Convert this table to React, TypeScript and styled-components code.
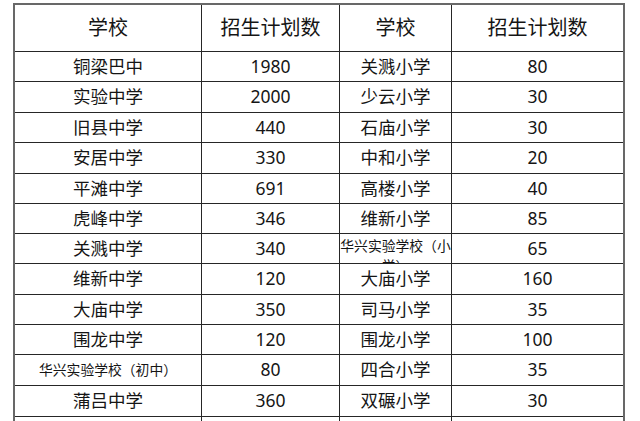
import React from "react";
import { styled, createGlobalStyle } from "styled-components";

const GlobalStyle = createGlobalStyle`
  html, body {
    margin: 0;
    padding: 0;
    background: #ffffff;
    overflow: hidden;
  }
`;

const Page = styled.div`
  width: 640px;
  height: 421px;
  overflow: hidden;
  padding: 3px 0 0 13px;
  box-sizing: border-box;

  font-family: "Noto Sans", "Noto Sans CJK SC", sans-serif;
  color: #151515;
`;

const Sheet = styled.div`
  display: grid;
  grid-template-columns: 186px 137px 111px 171px;
  grid-template-rows: 46px 29px 30px 29px 30px 29px 29px 29px 30px 29px 29px 30px 30px 30px;
  gap: 1px;
  width: 608px;

  background: #262626;
  border: 2px solid #686868;
  border-bottom: none;
`;

const Cell = styled.div<{ $head?: boolean; $small?: boolean; $wrap?: boolean }>`
  background: #ffffff;
  overflow: hidden;

  display: flex;
  justify-content: center;
  align-items: ${(p) => (p.$wrap ? "flex-start" : "center")};
  padding-top: ${(p) => (p.$wrap ? "2px" : "0")};
  box-sizing: border-box;

  font-size: ${(p) => (p.$head ? "20px" : p.$small ? "13.8px" : "17.5px")};
  line-height: ${(p) => (p.$wrap ? "20px" : "1")};
  text-align: center;
  white-space: ${(p) => (p.$wrap ? "normal" : "nowrap")};
  word-break: break-all;
`;

type Row = [string, string, string, string];

const rows: Row[] = [
  ["铜梁巴中", "1980", "关溅小学", "80"],
  ["实验中学", "2000", "少云小学", "30"],
  ["旧县中学", "440", "石庙小学", "30"],
  ["安居中学", "330", "中和小学", "20"],
  ["平滩中学", "691", "高楼小学", "40"],
  ["虎峰中学", "346", "维新小学", "85"],
  ["关溅中学", "340", "华兴实验学校（小学）", "65"],
  ["维新中学", "120", "大庙小学", "160"],
  ["大庙中学", "350", "司马小学", "35"],
  ["围龙中学", "120", "围龙小学", "100"],
  ["华兴实验学校（初中）", "80", "四合小学", "35"],
  ["蒲吕中学", "360", "双碾小学", "30"],
  ["", "", "", ""],
];

const App = () => {
  return (
    <Page>
      <GlobalStyle />
      <Sheet>
        <Cell $head>学校</Cell>
        <Cell $head>招生计划数</Cell>
        <Cell $head>学校</Cell>
        <Cell $head>招生计划数</Cell>
        {rows.map((r, i) => (
          <React.Fragment key={i}>
            <Cell $small={r[0].length > 6}>{r[0]}</Cell>
            <Cell>{r[1]}</Cell>
            <Cell $small={r[2].length > 6} $wrap={r[2].length > 6}>
              {r[2]}
            </Cell>
            <Cell>{r[3]}</Cell>
          </React.Fragment>
        ))}
      </Sheet>
    </Page>
  );
};

export default App;
